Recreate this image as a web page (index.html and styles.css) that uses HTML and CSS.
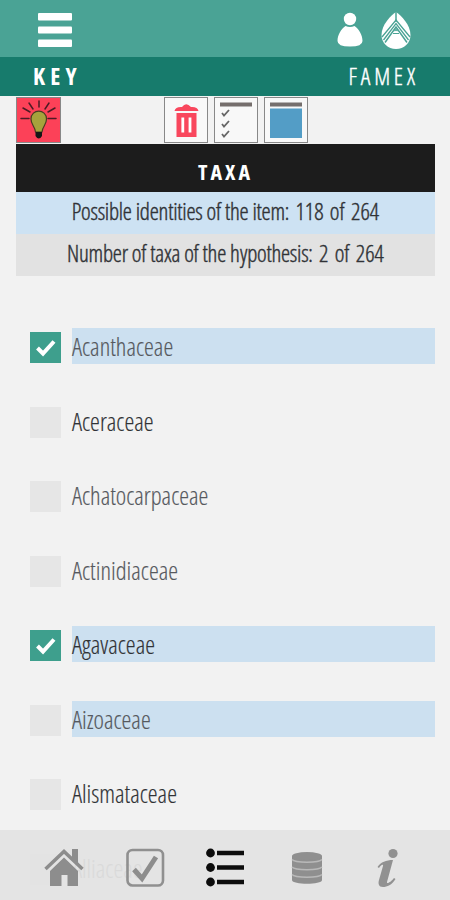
FILE: index.html
```html
<!DOCTYPE html>
<html lang="en">
<head>
<meta charset="utf-8">
<title>Key</title>
<link rel="stylesheet" href="styles.css">
</head>
<body>
<div class="app">
  <header class="topbar">
    <svg class="menu" width="34" height="35" viewBox="0 0 34 35"><g fill="#fff"><rect width="34" height="7.500" rx="1"/><rect y="13.500" width="34" height="7" rx="1"/><rect y="26.500" width="34" height="7.500" rx="1"/></g></svg>
    <div class="account">
      <svg width="26" height="36" viewBox="0 0 26 36" fill="#fff"><circle cx="13" cy="7" r="6.200"/><path d="M8.500 14Q13 16 17.500 14C22 17 25.500 23 25.500 29Q25.500 34.500 13 34.500T.5 29C.5 23 4 17 8.500 14Z"/></svg>
      <svg width="30" height="37" viewBox="0 0 30 37"><path d="M15 0C20 3 29.500 13 29.500 23C29.500 31 23 37 15 37S.5 31 .5 23C.5 13 10 3 15 0Z" fill="#fff"/><g fill="none" stroke="#4aa395"><path d="M15 0V10" stroke-width="1.500"/><path d="M1 25L15 8L29 25" stroke-width="1.300"/><path d="M2.500 28L15 11.500L27.500 28" stroke-width="1.300"/><path d="M4 30.500L15 15L26 30.500" stroke-width="1.500"/><path d="M12 21.500H18M13.500 19L15 17.500L16.500 19" stroke-width="1.200"/></g></svg>
    </div>
  </header>
  <div class="titlebar"><b class="key">KEY</b><span class="famex">FAMEX</span></div>
  <main>
    <div class="tools">
      <span class="tool hint"><svg width="43" height="44" viewBox="0 0 43 44"><g stroke="#4d1b24" stroke-width="1.500" stroke-linecap="round"><path d="M4 20.500H12M6 10L13 14M12 5L16 11M22 3V9M32 5L28 11M38 10L31 14M31 20.500H39"/></g><path d="M14 21C14 10.500 29.500 10.500 29.500 21C29.500 27 25.500 28 25 34H18.500C18 28 14 27 14 21Z" fill="#a6a33c" stroke="#493c20" stroke-width="1.200"/><path d="M18.500 34H25V38Q21.700 43 18.500 38Z" fill="#161616"/></svg></span>
      <span class="tool trash"><svg width="42" height="43" viewBox="0 0 42 43"><path d="M9.500 13Q10.500 8.500 17 9Q21 3.500 26 9Q32.500 8.500 33.500 13Z" fill="#f9475d"/><path d="M11.500 15H31.500V39H11.500Z" fill="#f9475d"/><path d="M17.800 19.500V34.500M25 19.500V34.500" stroke="#fff" stroke-width="2.800"/></svg></span>
      <span class="tool"><svg width="42" height="43" viewBox="0 0 42 43"><path d="M5 6.500H37" stroke="#756e6c" stroke-width="4"/><g fill="none" stroke="#666" stroke-width="1.800"><path d="M7 15L9 17.500L14 12M7 26L9 28.500L14 23M7 36L9 38.500L14 33"/></g></svg></span>
      <span class="tool"><svg width="42" height="43" viewBox="0 0 42 43"><path d="M5 6.500H37" stroke="#756e6c" stroke-width="4"/><path d="M5 10.500H37V40H5Z" fill="#539dc6"/></svg></span>
    </div>
    <h1><span class="taxa">TAXA</span></h1>
    <p class="stat blue"><span class="label">Possible identities of the item:</span> <span class="count">118 of 264</span></p>
    <p class="stat gray"><span class="label">Number of taxa of the hypothesis:</span> <span class="count">2 of 264</span></p>
    <ul class="list">
      <li><i class="box on"><svg width="31" height="31" viewBox="0 0 31 31"><path d="M7.500 16L13 21.500L24 9.500" fill="none" stroke="#fff" stroke-width="4"/></svg></i><span class="name marked soft">Acanthaceae</span></li>
      <li><i class="box"></i><span class="name">Aceraceae</span></li>
      <li><i class="box"></i><span class="name soft">Achatocarpaceae</span></li>
      <li><i class="box"></i><span class="name soft">Actinidiaceae</span></li>
      <li><i class="box on"><svg width="31" height="31" viewBox="0 0 31 31"><path d="M7.500 16L13 21.500L24 9.500" fill="none" stroke="#fff" stroke-width="4"/></svg></i><span class="name marked">Agavaceae</span></li>
      <li><i class="box"></i><span class="name marked soft">Aizoaceae</span></li>
      <li><i class="box"></i><span class="name">Alismataceae</span></li>
      <li><i class="box"></i><span class="name">Alliaceae</span></li>
    </ul>
  </main>
  <nav class="tabs">
    <svg viewBox="0 0 40 40" width="40" height="40"><path d="M1.500 22L20 4.500L38.500 22" fill="none" stroke="#8d8d8d" stroke-width="3.500"/><path d="M28 2H34V17L28 11ZM6 24L20 10.500L34 24V39H23.500V28H17.500V39H6Z" fill="#8d8d8d"/></svg>
    <svg viewBox="0 0 40 40" width="40" height="40"><rect x="2.500" y="3" width="35.500" height="35.500" rx="5" fill="none" stroke="#909090" stroke-width="2.600"/><path d="M9 22.500L17 31.500L31 10" fill="none" stroke="#8d8d8d" stroke-width="5"/></svg>
    <svg viewBox="0 0 40 40" width="40" height="40"><g fill="#0c0c0c"><circle cx="4.500" cy="6" r="4.400"/><circle cx="4.500" cy="20.500" r="4.400"/><circle cx="4.500" cy="35" r="4.400"/></g><path d="M11 6H38M11 20.500H38M11 35H38" stroke="#0c0c0c" stroke-width="4.500"/></svg>
    <svg viewBox="0 0 40 40" width="40" height="40"><g fill="#8f8f8f"><path d="M5 9V33C5 38 35 38 35 33V9Z"/><ellipse cx="20" cy="9" rx="15" ry="4"/></g><path d="M5 12.500C8 16 32 16 35 12.500M5 20C8 23.500 32 23.500 35 20M5 27.500C8 31 32 31 35 27.500" fill="none" stroke="#b9b9b9" stroke-width="1.500"/></svg>
    <svg viewBox="0 0 40 40" width="40" height="40"><circle cx="25" cy="6.500" r="4.600" fill="#919191"/><path d="M9.500 20C13 15 18 13 25 13L19 35C18.500 38 24 34 26 31L27.500 32C24 38 19 40 15 40C10.500 40 10 36.500 11 33L15 19C15.500 16.500 12.500 18.500 11 21Z" fill="#919191"/></svg>
  </nav>
</div>
</body>
</html>
```
FILE: styles.css
```css
* { box-sizing: border-box; }
body { margin: 0; background: #f2f2f2; color: #303236; font-family: "Open Sans", sans-serif; font-stretch: 75%; font-weight: 300; font-size: 24.800px; }
.app { height: 900px; overflow: hidden; position: relative; }
.topbar { height: 57px; background: #4aa395; display: flex; justify-content: space-between; align-items: flex-start; padding: 13px 39px 0 38px; }
.account { display: flex; gap: 18px; margin-top: -1px; }
.titlebar { height: 39px; background: #177b6c; color: #fff; display: flex; justify-content: space-between; align-items: center; padding: 0 31px 0 33px; line-height: 39px; }
.key { font-weight: 700; font-size: 23.500px; letter-spacing: 5.200px; }
.famex { font-size: 23.500px; letter-spacing: 3.800px; -webkit-text-stroke: .4px; }
main { padding: 0 15px 0 16px; }
.tools { display: flex; height: 48px; padding-top: 1px; gap: 6px; }
.tool { width: 44px; height: 46px; border: 1px solid #888; background: #f8f8f8; overflow: hidden; flex: none; }
.tool svg { display: block; }
.hint { background: #fc4158; width: 45px; }
.trash { margin-left: 97px; }
h1 { margin: 0; height: 48px; background: #1c1c1c; color: #fff; text-align: center; font-size: 22px; line-height: 54px; letter-spacing: 3px; font-weight: 700; }
.stat { margin: 0; height: 42px; line-height: 38px; text-align: center; font-size: 23px; white-space: nowrap; -webkit-text-stroke: .4px; }
.label { letter-spacing: -.23px; margin-right: 2px; }
.count { word-spacing: 2px; }
.blue { background: #cde2f3; }
.gray { background: #e2e2e2; }
.list { list-style: none; margin: 52px 0 0; padding: 0 0 0 14px; display: grid; grid-auto-rows: 36px; row-gap: 38.500px; }
.list li { display: flex; align-items: center; gap: 11px; }
.box { width: 31px; height: 31px; background: #e6e6e6; flex: none; margin-top: 3px; }
.on { background: #3e9f8d; }
.box svg { display: block; }
.name { flex: 1; height: 36px; line-height: 37px; white-space: nowrap; -webkit-text-stroke: .15px; }
.marked { background: #cce0f0; }
.soft { color: #56595e; }
.tabs { position: absolute; left: 0; right: 0; bottom: 0; height: 70px; padding: 17px 0 0 44px; display: flex; gap: 41px; background: rgba(227, 227, 227, .95); }
```
